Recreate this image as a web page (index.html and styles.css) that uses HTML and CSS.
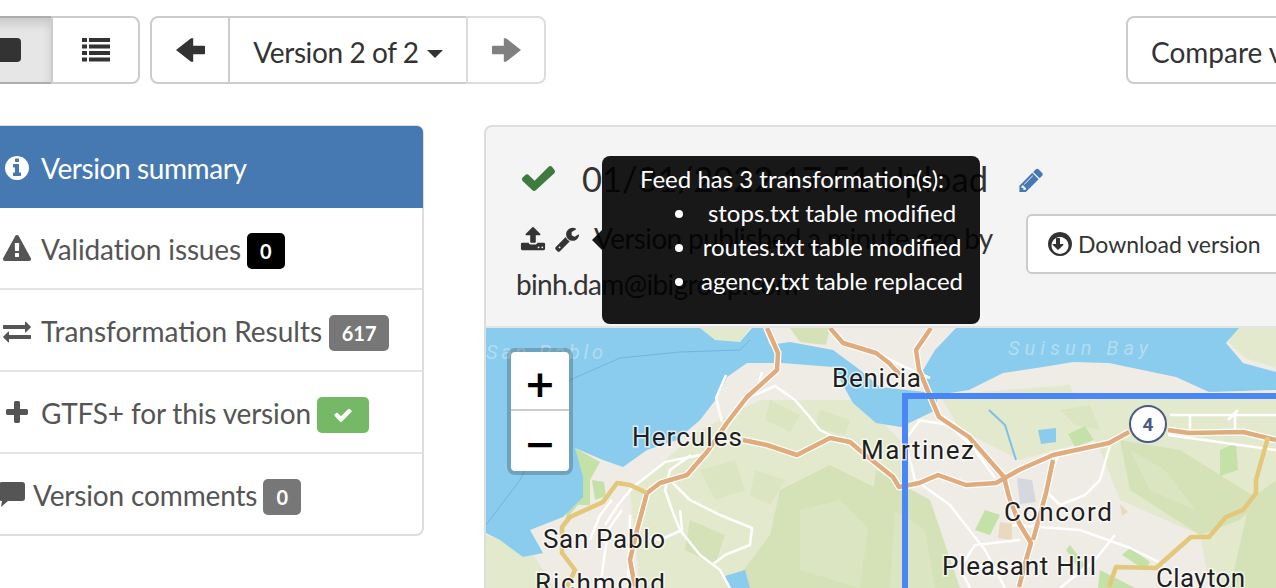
FILE: index.html
```html
<!DOCTYPE html>
<html lang="en">
<head>
  <meta charset="UTF-8" />
  <title>Feed version</title>
  <link rel="stylesheet" href="styles.css">
</head>
<body>
<div class="page">

  <div class="toolbar">
    <div class="btn-group view-toggle">
      <button class="btn active"><svg class="ico-square" viewBox="0 0 24 24"><rect width="24" height="24" rx="4"/></svg></button>
      <button class="btn btn-list">
        <svg class="ico-list" viewBox="0 0 28 24">
          <path d="M0 0h5v4H0zM7 0h21v4H7zM0 6.500h5v4H0zM7 6.500h21v4H7zM0 13h5v4H0zM7 13h21v4H7zM0 19.500h5v4H0zM7 19.500h21v4H7z"/>
        </svg>
      </button>
    </div>

    <div class="btn-group version-nav">
      <button class="btn btn-arrow">
        <svg class="ico-arrow" viewBox="0 0 27 22"><path d="M0 11 14 0h2v7h10q1 0 1 1v6q0 1-1 1H16v7h-2z"/></svg>
      </button>
      <button class="btn btn-version">Version 2 of 2 <span class="caret"></span></button>
      <button class="btn btn-arrow disabled">
        <svg class="ico-arrow" viewBox="0 0 27 22"><path d="M27 11 13 0h-2v7H1q-1 0-1 1v6q0 1 1 1h10v7h2z"/></svg>
      </button>
    </div>

    <button class="btn btn-compare">Compare versions</button>
  </div>

  <div class="content">
    <ul class="side-list">
      <li class="side-item selected">
        <svg class="ico" viewBox="0 0 1792 1792"><path d="M1152 1376v-160q0-14-9-23t-23-9h-96v-512q0-14-9-23t-23-9h-320q-14 0-23 9t-9 23v160q0 14 9 23t23 9h96v320h-96q-14 0-23 9t-9 23v160q0 14 9 23t23 9h448q14 0 23-9t9-23zm-128-896v-160q0-14-9-23t-23-9h-192q-14 0-23 9t-9 23v160q0 14 9 23t23 9h192q14 0 23-9t9-23zm640 416q0 209-103 385.500t-279.500 279.500-385.500 103-385.500-103-279.500-279.500-103-385.500 103-385.500 279.500-279.500 385.500-103 385.500 103 279.500 279.500 103 385.500z"/></svg>
        <span>Version summary</span>
      </li>
      <li class="side-item tight">
        <svg class="ico" viewBox="0 0 1792 1792"><path d="M1024 1375v-190q0-14-9.500-23.500t-22.500-9.500h-192q-13 0-22.500 9.500t-9.500 23.500v190q0 14 9.500 23.500t22.500 9.500h192q13 0 22.500-9.500t9.500-23.500zm-2-374l18-459q0-12-10-19-13-11-24-11h-220q-11 0-24 11-10 7-10 21l17 457q0 10 10 16.500t24 6.500h185q14 0 23.500-6.500t10.500-16.500zm-14-934l768 1408q35 63-2 126-17 29-46.500 46t-63.500 17h-1536q-34 0-63.500-17t-46.500-46q-37-63-2-126l768-1408q17-31 47-49t65-18 65 18 47 49z"/></svg>
        <span>Validation issues</span>
        <span class="badge badge-black">0</span>
      </li>
      <li class="side-item">
        <svg class="ico" viewBox="0 0 1792 1792"><path d="M1792 1184v192q0 13-9.500 22.500t-22.500 9.500h-1376v192q0 13-9.500 22.500t-22.500 9.500q-12 0-24-10l-319-320q-9-9-9-22 0-14 9-23l320-320q9-9 23-9 13 0 22.500 9.500t9.500 22.500v192h1376q13 0 22.500 9.500t9.500 22.500zm0-544q0 14-9 23l-320 320q-9 9-23 9-13 0-22.500-9.500t-9.500-22.500v-192h-1376q-13 0-22.500-9.500t-9.500-22.500v-192q0-13 9.500-22.500t22.500-9.500h1376v-192q0-14 9-23t23-9q12 0 24 10l319 319q9 9 9 23z"/></svg>
        <span>Transformation Results</span>
        <span class="badge badge-count">617</span>
      </li>
      <li class="side-item tight">
        <svg class="ico" viewBox="0 0 1792 1792"><path d="M1600 736v192q0 40-28 68t-68 28h-416v416q0 40-28 68t-68 28h-192q-40 0-68-28t-28-68v-416h-416q-40 0-68-28t-28-68v-192q0-40 28-68t68-28h416v-416q0-40 28-68t68-28h192q40 0 68 28t28 68v416h416q40 0 68 28t28 68z"/></svg>
        <span>GTFS+ for this version</span>
        <span class="badge badge-green">
          <svg class="ico-small" viewBox="0 0 1792 1792"><path d="M1671 566q0 40-28 68l-724 724-136 136q-28 28-68 28t-68-28l-136-136-362-362q-28-28-28-68t28-68l136-136q28-28 68-28t68 28l294 295 656-657q28-28 68-28t68 28l136 136q28 28 28 68z"/></svg>
        </span>
      </li>
      <li class="side-item comments tight">
        <svg class="ico-comment" viewBox="0 0 26 26"><path d="M3 0h20q3 0 3 3v13q0 3-3 3H9l-7 6 1-6q-3 0-3-3V3q0-3 3-3z"/></svg>
        <span>Version comments</span>
        <span class="badge">0</span>
      </li>
    </ul>

    <section class="version-panel">
      <div class="panel-header">
        <div class="title-row">
          <svg class="ico-check" viewBox="0 0 33 25"><path d="M33 5.500q0 1-.7 1.700L13.800 24.300q-.7.700-1.700.700t-1.700-.7L.7 14.900q-.7-.7-.7-1.700t.7-1.700l2.600-2.500q.7-.7 1.700-.7t1.700.7l5.900 5.700L26.600.7q.7-.7 1.700-.7t1.700.7l2.300 3.100q.7.700.7 1.700z"/></svg>
          <h2 class="version-title">01/31/2022 17:51 Upload</h2>
          <svg class="ico-pencil" viewBox="100 100 1560 1560"><path d="M491 1536l91-91-235-235-91 91v107h128v128h107zm523-928q0-22-22-22-10 0-17 7l-542 542q-7 7-7 17 0 22 22 22 10 0 17-7l542-542q7-7 7-17zm-54-192l416 416-832 832h-416v-416zm683 96q0 53-37 90l-166 166-416-416 166-165q36-38 90-38 53 0 91 38l235 234q37 39 37 91z"/></svg>
        </div>
        <div class="meta-row">
          <div class="meta-text">
            <svg class="ico-meta" viewBox="0 0 1792 1792"><path d="M1344 1472q0-26-19-45t-45-19-45 19-19 45 19 45 45 19 45-19 19-45zm256 0q0-26-19-45t-45-19-45 19-19 45 19 45 45 19 45-19 19-45zm128-224v320q0 40-28 68t-68 28h-1472q-40 0-68-28t-28-68v-320q0-40 28-68t68-28h427q21 56 70.500 92t110.500 36h256q61 0 110.500-36t70.500-92h427q40 0 68 28t28 68zm-325-648q-17 40-59 40h-256v448q0 26-19 45t-45 19h-256q-26 0-45-19t-19-45v-448h-256q-42 0-59-40-17-39 14-69l448-448q18-19 45-19t45 19l448 448q31 30 14 69z"/></svg>
            <svg class="ico-meta" viewBox="0 0 1792 1792"><path d="M448 1472q0-26-19-45t-45-19-45 19-19 45 19 45 45 19 45-19 19-45zm644-420l-682 682q-37 37-90 37-52 0-91-37l-106-108q-38-36-38-90 0-53 38-91l681-681q39 98 114.500 173.500t173.500 114.500zm634-435q0 39-23 106-47 134-164.500 217.500t-258.500 83.500q-185 0-316.500-131.500t-131.500-316.500 131.500-316.500 316.500-131.500q58 0 121.500 16.500t107.500 46.500q16 11 16 28t-16 28l-293 169v224l193 107q5-3 79-48.500t135.500-81 70.500-35.500q15 0 23.500 10t8.500 25z"/></svg>
            Version published a minute ago by binh.dam@ibigroup.com
          </div>
          <button class="btn btn-download">
            <svg class="ico-download" viewBox="128 128 1536 1536"><path d="M1120 928q0 12-10 24l-319 319q-11 9-23 9t-23-9l-320-320q-15-16-7-35 8-20 30-20h192v-352q0-14 9-23t23-9h192q14 0 23 9t9 23v352h192q14 0 23 9t9 23zm-224-480q-148 0-273 73t-198 198-73 273 73 273 198 198 273 73 273-73 198-198 73-273-73-273-198-198-273-73zm768 448q0 209-103 385.500t-279.500 279.500-385.500 103-385.500-103-279.500-279.500-103-385.500 103-385.500 279.500-279.500 385.500-103 385.500 103 279.500 279.500 103 385.500z"/></svg>
            Download version
          </button>
        </div>
      </div>

      <div class="map">
        <svg class="map-canvas" viewBox="486 328 790 260" width="790" height="260">
          <rect class="land" x="486" y="328" width="790" height="260"/>

          <!-- hills -->
          <path class="hill" d="M700 430 760 400 860 400 900 440 905 588 640 588 630 490Z"/>
          <path class="hill-dark" d="M780 490 830 465 900 500 905 588 730 588 770 535Z"/>
          <path class="hill-mid" d="M800 510 840 500 870 530 860 588 800 570Z"/>
          <path class="hill-mid" d="M770 400 800 415 790 432 765 420Z"/>
          <path class="hill-mid" d="M700 470 735 460 745 490 715 500Z"/>
          <path class="hill-mid" d="M820 410 850 420 845 435 815 428Z"/>
          <path class="hill-dark" d="M690 520 725 535 715 565 685 550Z"/>
          <path class="hill-mid" d="M755 470 785 480 770 505 750 495Z"/>
          <path class="hill" d="M486 535 530 550 555 588 486 588Z"/>
          <path class="hill-dark" d="M876 470 930 500 960 588 860 588Z"/>
          <path class="hill-mid" d="M895 510 925 530 935 588 890 588Z"/>
          <path class="hill" d="M1070 400 1276 395 1276 588 1210 588 1200 535 1120 500 1100 450Z"/>
          <path class="hill-dark" d="M1120 440 1180 450 1260 500 1240 520 1200 535 1130 490Z"/>
          <path class="hill-mid" d="M1130 450 1165 470 1195 510 1150 490Z"/>
          <path class="hill-dark" d="M1250 500 1276 480 1276 588 1230 588Z"/>
          <path class="hill" d="M940 395 1070 385 1090 440 1020 460 960 430Z"/>
          <path class="hill-mid" d="M1060 410 1090 405 1100 430 1075 425Z"/>
          <path class="hill" d="M700 328 750 328 740 342 712 340Z"/>
          <path class="hill-dark" d="M790 328 830 328 826 345 800 342Z"/>
          <path class="hill" d="M1238 328 1276 328 1276 368 1245 358 1228 342Z"/>
          <path class="park" d="M575 448 600 462 590 480 590 505 578 505 565 520 575 480Z"/>
          <path class="park" d="M592 480 604 482 606 496 595 500Z"/>
          <path class="park" d="M1068 434 1085 426 1094 440 1075 447Z"/>
          <path class="park" d="M1220 450 1236 443 1238 470 1220 476Z"/>
          <path class="park" d="M985 510 1000 515 990 535 975 530Z"/>
          <path class="park" d="M1070 545 1085 565 1080 570 1066 550Z"/>
          <path class="park" d="M1130 548 1150 562 1145 570 1122 555Z"/>
          <path class="park" d="M1100 570 1135 588 1098 588Z"/>
          <path class="lake" d="M1017 478 1032 480 1036 502 1020 504Z"/>
          <path class="sand" d="M1000 522 1012 524 1012 540 998 538Z"/>
          <path class="sand" d="M1120 504 1128 512 1122 516Z"/>

          <!-- water -->
          <path class="water" d="M486 328H700L715 340 740 342 752 328H763L770 345 782 363 747 363 727 377 717 398 700 420 677 440 647 450 623 467 603 460 575 448 583 477 583 497 563 517 530 530 543 553 523 557 500 540 486 533Z"/>
          <path class="water" d="M770 345 790 342 833 350 860 370 880 387 925 392 919 377 935 350 956 328H1239L1226 343 1243 363 1276 372V390L1209 392 1176 377 1109 363 1073 362 1043 367 1003 373 969 390 937 395 936 410 901 427 876 423 853 403 833 367 782 363Z"/>
          <path class="water-thin" d="M486 525 520 480 570 380 620 358 680 352 740 350 750 340"/>
          <path class="water" d="M1038 430 1056 428 1056 442 1041 444Z"/>
          <path class="water" d="M725 576 745 570 750 588 730 588Z"/>
          <path class="creek" d="M989 410 1005 425 1016 460"/>

          <!-- minor roads -->
          <g class="road-minor">
            <path d="M762 372 755 395 775 386 795 400 808 415 820 430 840 440"/>
            <path d="M726 375 716 398 722 422M700 455 665 462 632 488 618 505 605 525M691 455 670 470 665 490 672 510 680 530 700 555 720 570 730 588"/>
            <path d="M670 480 690 500 720 515 752 528 750 545 725 555 712 565M680 510 682 530 660 540 650 537"/>
            <path d="M876 352 900 365 930 378M920 420 905 440 915 480 950 505 985 550 1005 588"/>
            <path d="M918 420 950 425 975 450 995 478"/>
            <path d="M1110 445 1100 480 1085 495 1060 505 1045 490 1060 450"/>
            <path d="M1012 525 1080 530 1130 548 1165 565M1020 540 975 545 960 568 970 588M1115 535 1095 560 1060 588"/>
            <path d="M1170 415H1276M1190 415V430M1235 415V430M1228 420 1238 410"/>
            <path d="M1168 435 1240 445 1276 450"/>
            <path d="M590 540 600 515 612 500M630 515 628 588M600 588 608 530 622 510"/>
          </g>

          <!-- highways -->
          <g class="road-casing">
            <path d="M635 587 630 560 637 530 647 493 660 483 687 475 707 452 727 423 747 397 777 370 778 353 767 328"/>
            <path d="M743 440 767 445 797 455 830 438 850 442 863 453 893 477 899 487 919 483 938 475 966 485 996 483 1019 470 1053 455 1109 443 1129 432M1168 430 1189 433 1243 432 1276 440"/>
            <path d="M931 328 916 350 919 370 936 410 939 417 969 437 1004 477 1009 497 1019 523 1031 543 1026 560 1019 587"/>
            <path d="M1053 460 1046 493 1033 540"/>
            <path d="M830 328 843 343 876 353 889 363 900 375"/>
          </g>
          <g class="road-major">
            <path d="M635 587 630 560 637 530 647 493 660 483 687 475 707 452 727 423 747 397 777 370 778 353 767 328"/>
            <path d="M743 440 767 445 797 455 830 438 850 442 863 453 893 477 899 487 919 483 938 475 966 485 996 483 1019 470 1053 455 1109 443 1129 432M1168 430 1189 433 1243 432 1276 440"/>
            <path d="M931 328 916 350 919 370 936 410 939 417 969 437 1004 477 1009 497 1019 523 1031 543 1026 560 1019 587"/>
            <path d="M1053 460 1046 493 1033 540"/>
            <path d="M830 328 843 343 876 353 889 363 900 375"/>
          </g>
          <g class="road-yellow">
            <path d="M647 493 630 485 617 483 603 502 570 517 562 527 562 553 575 570 567 587"/>
            <path d="M1268 437 1256 480 1256 493 1243 510 1226 517 1209 537 1191 537 1156 568 1116 567 1109 587"/>
          </g>

          <!-- bounds -->
          <path class="bounds" d="M905 588V396H1276"/>

          <!-- labels -->
          <text class="label-water" x="486" y="359" textLength="117">San Pablo</text>
          <text class="label-water" x="1008" y="355" textLength="140">Suisun Bay</text>
          <text class="label" x="832" y="387" textLength="89">Benicia</text>
          <text class="label" x="632" y="446" textLength="110">Hercules</text>
          <text class="label" x="861" y="459" textLength="113">Martinez</text>
          <text class="label" x="1004" y="521" textLength="108">Concord</text>
          <text class="label" x="942" y="575" textLength="154">Pleasant Hill</text>
          <text class="label" x="543" y="548" textLength="122">San Pablo</text>
          <text class="label" x="535" y="592" textLength="130">Richmond</text>
          <text class="label" x="1156" y="587" textLength="89">Clayton</text>

          <!-- cluster marker -->
          <circle class="marker" cx="1148" cy="424" r="18"/>
          <text class="marker-text" x="1148" y="431">4</text>
        </svg>

        <div class="zoom-control">
          <div class="zoom-btn"><span>+</span></div>
          <div class="zoom-btn"><span>−</span></div>
        </div>
      </div>
    </section>
  </div>

  <div class="tooltip">
    <div class="tooltip-arrow"></div>
    Feed has 3 transformation(s):
    <ul>
      <li>stops.txt table modified</li>
      <li>routes.txt table modified</li>
      <li>agency.txt table replaced</li>
    </ul>
  </div>

</div>
</body>
</html>
```

FILE: styles.css
```css
* {
  box-sizing: border-box;
}

body {
  margin: 0;
  font-family: Lato, "Open Sans", sans-serif;
  font-size: 28px;
  color: #333;
  background: #fff;
}

.page {
  position: relative;
  width: 1276px;
  height: 588px;
  overflow: hidden;
}

/* toolbar */
.toolbar {
  display: flex;
  width: 1500px;
  margin-left: -40px;
  padding-top: 16px;
}

.btn-group {
  display: flex;
}

.btn {
  display: flex;
  align-items: center;
  justify-content: center;
  height: 68px;
  padding: 0;
  font: inherit;
  color: #333;
  background: #fff;
  border: 2px solid #ccc;
}

.btn-group .btn:first-child {
  border-radius: 8px 0 0 8px;
}
.btn-group .btn:last-child {
  border-radius: 0 8px 8px 0;
}
.btn-group .btn + .btn {
  margin-left: -2px;
}

.view-toggle .active {
  justify-content: flex-end;
  width: 93px;
  padding-right: 30px;
  background: #e6e6e6;
  border-color: #adadad;
  box-shadow: inset 0 6px 10px rgba(0, 0, 0, 0.125);
}
.btn-list {
  width: 89px;
}
.ico-square {
  width: 24px;
  height: 24px;
  fill: #333;
}
.ico-list {
  width: 28px;
  height: 24px;
  fill: #333;
}

.version-nav {
  margin-left: 10px;
}
.btn-arrow {
  width: 80px;
}
.btn-version {
  gap: 8px;
  width: 240px;
  padding-top: 3px;
  letter-spacing: -0.4px;
}
.ico-arrow {
  width: 29px;
  height: 24px;
  fill: #333;
}
.disabled {
  border-color: #ddd;
}
.disabled .ico-arrow {
  fill: #808080;
}
.caret {
  width: 0;
  height: 0;
  margin-top: 5px;
  border-top: 8px solid #333;
  border-left: 8px solid transparent;
  border-right: 8px solid transparent;
}

.btn-compare {
  width: 320px;
  margin-left: 580px;
  padding: 3px 0 0 23px;
  justify-content: flex-start;
  border-radius: 8px;
}

/* sidebar and panel */
.content {
  display: flex;
  margin: 41px 0 0 -40px;
}

.side-list {
  flex: none;
  width: 464px;
  height: 411px;
  margin: 0;
  padding: 0;
  list-style: none;
  background: #fff;
  border: 2px solid #ddd;
  border-radius: 8px;
}

.side-item {
  display: flex;
  align-items: center;
  gap: 6px;
  height: 82px;
  padding: 2px 0 0 41px;
  color: #555;
  border-bottom: 2px solid #e4e4e4;
}
.side-item span:nth-of-type(1) {
  margin-left: 4px;
}
.side-item:last-child {
  border-bottom: none;
  height: 80px;
}

.selected {
  height: 82px;
  margin: -1px -1px 0 0;
  letter-spacing: -0.4px;
  color: #fff;
  background: #4679b2;
  border-bottom: none;
  border-radius: 6px 6px 0 0;
}
.tight span:nth-of-type(1) {
  letter-spacing: -0.15px;
}

.ico {
  flex: none;
  width: 28px;
  height: 28px;
  fill: currentColor;
}

.comments {
  padding-left: 37px;
}
.comments span:nth-of-type(1) {
  margin-left: 2px;
}
.ico-comment {
  flex: none;
  width: 26px;
  height: 26px;
  fill: #555;
}

.badge {
  display: flex;
  align-items: center;
  justify-content: center;
  min-width: 38px;
  height: 36px;
  margin-top: 4px;
  padding: 0 12px;
  font-size: 20px;
  font-weight: 700;
  color: #fff;
  background: #777;
  border-radius: 5px;
}
.badge-black {
  background: #000;
}
.badge-count {
  width: 60px;
  margin-left: 1px;
}
.badge-green {
  width: 52px;
  background: #75b866;
}
.ico-small {
  width: 20px;
  height: 20px;
  fill: #fff;
}

.version-panel {
  flex: none;
  width: 900px;
  margin-left: 60px;
  background: #f4f4f4;
  border: 2px solid #ddd;
  border-radius: 8px 8px 0 0;
}

.panel-header {
  height: 201px;
  padding: 31px 0 0 30px;
  border-bottom: 2px solid #e4e4e4;
}

.title-row {
  display: flex;
  align-items: center;
  height: 40px;
  padding-left: 6px;
}
.ico-check {
  width: 33px;
  height: 25px;
  fill: #3f7a3f;
}
.version-title {
  margin: 0 0 0 27px;
  font-size: 34.500px;
  font-weight: 400;
  white-space: nowrap;
}
.ico-pencil {
  width: 24px;
  height: 24px;
  margin: 4px 0 0 31px;
  fill: #4679b2;
}

.meta-row {
  display: flex;
  align-items: flex-start;
  margin-top: 16px;
}
.meta-text {
  width: 490px;
  padding-top: 1px;
  line-height: 46px;
  letter-spacing: -0.65px;
}
.ico-meta {
  width: 26px;
  height: 26px;
  margin: 0 3px 0 4px;
  vertical-align: -3px;
  fill: #333;
}
.ico-meta + .ico-meta {
  margin: 0 9px 0 -2px;
}

.btn-download {
  justify-content: flex-start;
  gap: 6px;
  flex: none;
  width: 300px;
  height: 60px;
  margin-left: 20px;
  padding-left: 20px;
  font-size: 23px;
  border-radius: 6px;
}
.ico-download {
  width: 24px;
  height: 24px;
  fill: #333;
}

/* map */
.map {
  position: relative;
  height: 260px;
  overflow: hidden;
}
.map-canvas {
  display: block;
}

.land { fill: #efebe5; }
.hill { fill: #e3e9cd; }
.hill-mid { fill: #dbe5c2; }
.hill-dark { fill: #d5e2b8; }
.park { fill: #c4e2a8; }
.lake { fill: #d6d8e0; }
.sand { fill: #ead9bf; }
.water { fill: #89cced; }
.water-thin {
  fill: none;
  stroke: #74b4e0;
  stroke-width: 1;
}
.creek {
  fill: none;
  stroke: #7cc0e8;
  stroke-width: 2;
}

.road-minor path,
.road-casing path {
  fill: none;
  stroke: #fff;
  stroke-linejoin: round;
}
.road-minor path {
  stroke-width: 2.500;
}
.road-casing path {
  stroke-width: 7;
}
.road-major path,
.road-yellow path {
  fill: none;
  stroke-width: 4.500;
  stroke-linejoin: round;
}
.road-major path {
  stroke: #e0ac7e;
}
.road-yellow path {
  stroke: #e3c77b;
}

.bounds {
  fill: none;
  stroke: #4a87f5;
  stroke-width: 6;
}

.label {
  font-family: Roboto, sans-serif;
  font-size: 26px;
  fill: #1f1f1f;
  stroke: rgba(255, 255, 255, 0.7);
  stroke-width: 3px;
  paint-order: stroke;
}
.label-water {
  font-family: Roboto, sans-serif;
  font-size: 20px;
  font-style: italic;
  fill: #b4dcef;
}

.marker {
  fill: #fdfdfd;
  stroke: #4a5a85;
  stroke-width: 2;
}
.marker-text {
  font-family: Roboto, sans-serif;
  font-size: 19px;
  font-weight: 700;
  text-anchor: middle;
  fill: #4a5a85;
}

.zoom-control {
  position: absolute;
  top: 20px;
  left: 21px;
  width: 66px;
  height: 127px;
  background: #fff;
  background-clip: padding-box;
  border: 4px solid rgba(0, 0, 0, 0.2);
  border-radius: 8px;
}
.zoom-btn {
  display: flex;
  align-items: center;
  justify-content: center;
  height: 59px;
  padding-top: 6px;
  font-family: "DejaVu Sans", sans-serif;
  font-size: 38px;
  font-weight: 700;
  color: #000;
}
.zoom-btn:first-child {
  border-bottom: 2px solid #ccc;
}

/* tooltip */
.tooltip {
  position: absolute;
  top: 156px;
  left: 602px;
  width: 378px;
  height: 168px;
  padding: 6px 14px 6px 16px;
  font-size: 24px;
  line-height: 34px;
  text-align: center;
  color: #fff;
  background: rgba(0, 0, 0, 0.9);
  border-radius: 8px;
}
.tooltip ul {
  margin: 0;
  padding-left: 80px;
}
.tooltip-arrow {
  position: absolute;
  top: 74px;
  left: -10px;
  width: 0;
  height: 0;
  border-top: 10px solid transparent;
  border-bottom: 10px solid transparent;
  border-right: 10px solid rgba(0, 0, 0, 0.9);
}
```
